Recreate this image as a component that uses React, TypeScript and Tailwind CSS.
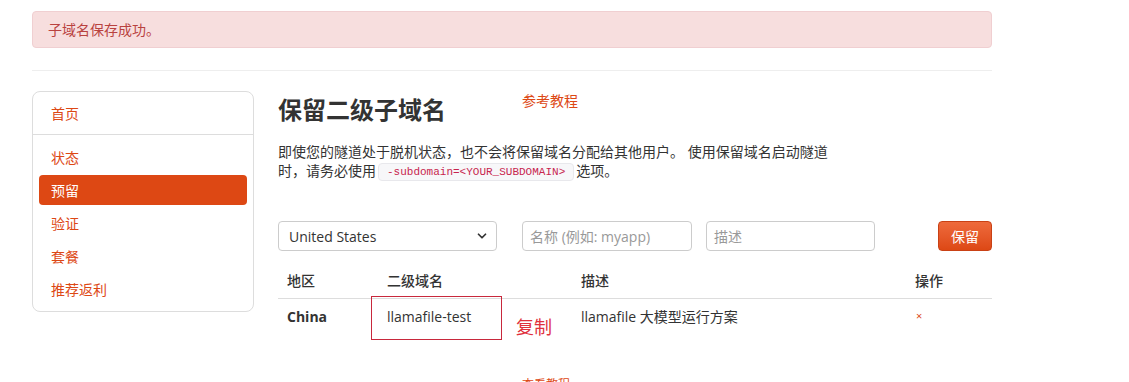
import { ChevronDown } from 'lucide-react';

const navItems = ['状态', '预留', '验证', '套餐', '推荐返利'];

const rows = [
  { region: 'China', subdomain: 'llamafile-test', desc: 'llamafile 大模型运行方案' },
];

export default function App() {
  return (
    <div
      className="min-h-screen bg-white text-[#333] text-[14px]"
      style={{ fontFamily: '"Open Sans", "Noto Sans CJK SC", sans-serif' }}
    >
      <div className="w-[960px] ml-8 pt-[11px]">
        {/* 提示 */}
        <div className="h-[37px] flex items-center px-[15px] rounded border border-[#f0cfd1] bg-[#f7dede] text-[#b9423f]">
          子域名保存成功。
        </div>

        <div className="mt-[22px] border-t border-[#eee]" />

        <div className="mt-[20px] flex items-start">
          {/* 侧边导航 */}
          <div className="w-[222px] rounded-lg border border-[#ddd] px-[6px] pt-[6px] pb-[7px]">
            <div className="h-[30px] flex items-center px-3 text-[#dd4814]">首页</div>
            <div className="-mx-[6px] mt-[6px] mb-[7px] border-t border-[#ddd]" />
            <div className="flex flex-col gap-[3px]">
              {navItems.map((item) => (
                <div
                  key={item}
                  className={`h-[30px] flex items-center px-3 rounded ${
                    item === '预留' ? 'bg-[#dd4814] text-white' : 'text-[#dd4814]'
                  }`}
                >
                  {item}
                </div>
              ))}
            </div>
          </div>

          {/* 主内容 */}
          <div className="relative ml-6 flex-1">
            <div className="flex items-start">
              <h1 className="w-[244px] mt-[3px] text-[24px] leading-[32px] font-bold text-[#333]">
                保留二级子域名
              </h1>
              <a className="text-[#dd4814] leading-[20px]">参考教程</a>
            </div>

            <p className="w-[556px] mt-[16px] leading-[19px]">
              即使您的隧道处于脱机状态，也不会将保留域名分配给其他用户。 使用保留域名启动隧道时，请务必使用
              <code
                className="inline-block align-middle mx-[2px] px-[8px] leading-[16px] rounded-sm border border-[#e8e8ec] bg-[#f7f7f9] text-[#c7254e] text-[11px]"
                style={{ fontFamily: '"Liberation Mono", monospace' }}
              >
                -subdomain=&lt;YOUR_SUBDOMAIN&gt;
              </code>
              选项。
            </p>

            {/* 表单 */}
            <div className="mt-[40px] flex items-center">
              <div className="relative w-[219px] h-[30px] rounded border border-[#ccc] flex items-center px-[10px]">
                <span>United States</span>
                <ChevronDown className="absolute right-[7px] w-[14px] h-[14px] text-[#333]" strokeWidth={3} />
              </div>
              <div className="ml-[25px] w-[170px] h-[30px] rounded border border-[#ccc] flex items-center px-[7px] text-[#999]">
                名称 (例如: myapp)
              </div>
              <div className="ml-[14px] w-[169px] h-[30px] rounded border border-[#ccc] flex items-center px-[7px] text-[#999]">
                描述
              </div>
              <button className="ml-auto w-[54px] h-[30px] rounded border border-[#c94115] bg-gradient-to-b from-[#ee6a3b] to-[#dd4814] text-white">
                保留
              </button>
            </div>

            {/* 表格 */}
            <table className="mt-[11px] w-full border-collapse">
              <thead>
                <tr className="border-b border-[#ddd]">
                  <th className="w-[100px] h-[36px] px-[9px] text-left font-medium">地区</th>
                  <th className="w-[194px] px-[9px] text-left font-medium">二级域名</th>
                  <th className="w-[334px] px-[9px] text-left font-medium">描述</th>
                  <th className="px-[9px] text-left font-medium">操作</th>
                </tr>
              </thead>
              <tbody>
                {rows.map((r) => (
                  <tr key={r.region}>
                    <td className="h-[36px] px-[9px] font-bold">{r.region}</td>
                    <td className="px-[9px]">{r.subdomain}</td>
                    <td className="px-[9px]">{r.desc}</td>
                    <td className="px-[10px] text-[#dd4814] text-[11px]">×</td>
                  </tr>
                ))}
              </tbody>
            </table>

            {/* 标注 */}
            <div className="absolute left-[93px] top-[205px] w-[131px] h-[44px] border border-[#c8283c]" />
            <div className="absolute left-[238px] top-[225px] text-[18px] leading-[22px] text-[#e0313c]">复制</div>

            <p className="mt-[42px] ml-[244px] text-[#dd4814] text-[12px]">查看教程</p>
          </div>
        </div>
      </div>
    </div>
  );
}
